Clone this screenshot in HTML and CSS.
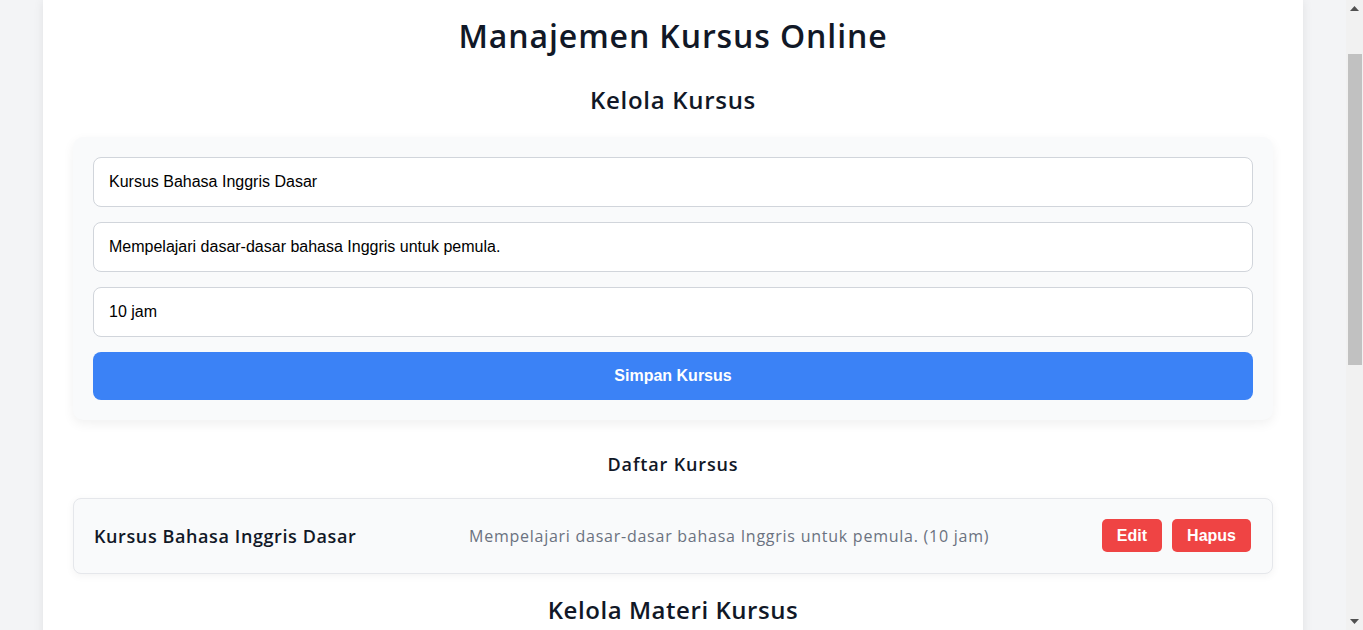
FILE: index.html
```html
<!DOCTYPE html>
<html lang="id">
<head>
<meta charset="utf-8">
<title>Manajemen Kursus Online</title>
<link rel="stylesheet" href="styles.css">
</head>
<body>
<div class="viewport">
  <main class="container">
    <h1 class="title">Manajemen Kursus Online</h1>
    <h2 class="section-title">Kelola Kursus</h2>
    <form class="form-card">
      <input class="field" type="text" value="Kursus Bahasa Inggris Dasar">
      <input class="field" type="text" value="Mempelajari dasar-dasar bahasa Inggris untuk pemula.">
      <input class="field" type="text" value="10 jam">
      <button class="btn-primary" type="button">Simpan Kursus</button>
    </form>
    <h3 class="list-title">Daftar Kursus</h3>
    <div class="course-item">
      <span class="course-name">Kursus Bahasa Inggris Dasar</span>
      <span class="course-desc">Mempelajari dasar-dasar bahasa Inggris untuk pemula. (10 jam)</span>
      <div class="actions">
        <button class="btn-danger" type="button">Edit</button>
        <button class="btn-danger" type="button">Hapus</button>
      </div>
    </div>
    <h2 class="section-title section-next">Kelola Materi Kursus</h2>
  </main>
</div>
<div class="scrollbar">
  <div class="sb-arrow"><svg width="9" height="5" viewBox="0 0 9 5"><path d="M0 5 L4.5 0 L9 5 Z" fill="#505050"/></svg></div>
  <div class="sb-track"><div class="sb-thumb"></div></div>
  <div class="sb-arrow"><svg width="9" height="5" viewBox="0 0 9 5"><path d="M0 0 L9 0 L4.5 5 Z" fill="#505050"/></svg></div>
</div>
</body>
</html>
```
FILE: styles.css
```css
html, body {
  margin: 0;
  height: 100%;
  overflow: hidden;
}
body {
  display: flex;
  font-family: "Open Sans", "Noto Sans", sans-serif;
  color: #111827;
}
.viewport {
  flex: 1;
  background: #f3f4f6;
  overflow: hidden;
  display: flex;
  justify-content: center;
  align-items: flex-start;
}
.container {
  width: 1200px;
  padding: 16px 30px 40px;
  background: #ffffff;
  box-shadow: 0 0 10px rgba(0, 0, 0, 0.08);
  min-height: 700px;
}
.title {
  margin: 0;
  font-size: 32px;
  line-height: 40px;
  font-weight: 600;
  text-align: center;
  letter-spacing: 0.9px;
}
.section-title {
  margin: 28px 0 21px;
  font-size: 24px;
  line-height: 32px;
  font-weight: 600;
  text-align: center;
  letter-spacing: 0.7px;
}
.section-next {
  margin-top: 20px;
  letter-spacing: 0.55px;
}
.form-card {
  background: #f9fafb;
  border-radius: 10px;
  padding: 20px;
  display: flex;
  flex-direction: column;
  gap: 15px;
  box-shadow: 0 4px 12px rgba(0, 0, 0, 0.06);
}
.field {
  height: 50px;
  box-sizing: border-box;
  border: 1px solid #d1d5db;
  border-radius: 8px;
  padding: 0 15px;
  font-family: "Liberation Sans", Arial, sans-serif;
  font-size: 16px;
  color: #000;
  background: #fff;
  outline: none;
}
.btn-primary {
  height: 48px;
  border: none;
  border-radius: 8px;
  background: #3b82f6;
  color: #fff;
  font-family: "Liberation Sans", Arial, sans-serif;
  font-weight: 700;
  font-size: 16px;
}
.list-title {
  margin: 31px 0 21px;
  font-size: 18px;
  line-height: 26px;
  font-weight: 600;
  text-align: center;
  letter-spacing: 0.85px;
}
.course-item {
  height: 76px;
  box-sizing: border-box;
  display: flex;
  align-items: center;
  justify-content: space-between;
  padding: 0 21px 0 20px;
  background: #f9fafb;
  border: 1px solid #e5e7eb;
  border-radius: 8px;
  box-shadow: 0 2px 8px rgba(0, 0, 0, 0.05);
}
.course-name {
  font-size: 18px;
  font-weight: 600;
  letter-spacing: 0.6px;
}
.course-desc {
  font-size: 16px;
  color: #6b7280;
  letter-spacing: 0.75px;
  margin-top: -1px;
}
.actions {
  display: flex;
  gap: 10px;
  margin-top: -1px;
}
.btn-danger {
  height: 33px;
  padding: 0 15px;
  border: none;
  border-radius: 5px;
  background: #ef4444;
  color: #fff;
  font-family: "Liberation Sans", Arial, sans-serif;
  font-weight: 700;
  font-size: 16px;
}
.scrollbar {
  width: 17px;
  flex: none;
  background: #f1f1f1;
  display: flex;
  flex-direction: column;
}
.sb-arrow {
  height: 17px;
  display: flex;
  align-items: center;
  justify-content: center;
}
.sb-track {
  flex: 1;
  padding: 37px 1px 0 2px;
}
.sb-thumb {
  height: 311px;
  background: #c1c1c1;
}
```
